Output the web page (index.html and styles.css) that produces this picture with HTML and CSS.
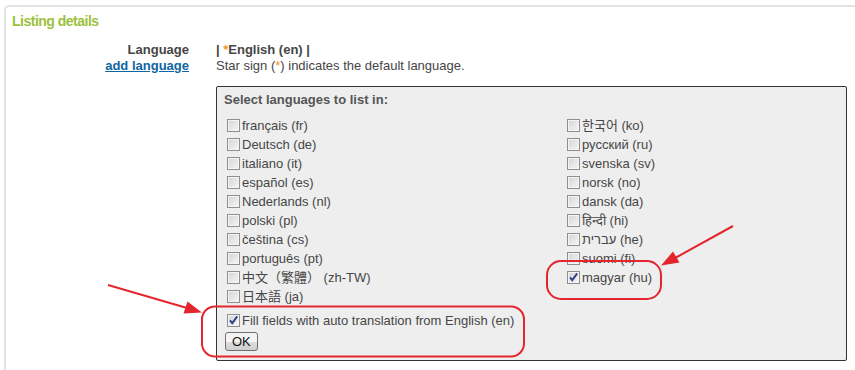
FILE: index.html
```html
<!DOCTYPE html>
<html lang="en">
<head>
    <meta charset="UTF-8">
    <meta name="viewport" content="width=device-width, initial-scale=1.0">
    <title>Listing details</title>
    <link rel="stylesheet" href="styles.css">
</head>
<body>
    <div class="panel">
        <h2 class="panel-title">Listing details</h2>
        <div class="field">
            <div class="field-label">
                <div>Language</div>
                <a href="#" class="add-link">add language</a>
            </div>
            <div class="field-value">
                <div class="current">| <span class="star">*</span>English (en) |</div>
                <div class="note">Star sign (<span class="star">*</span>) indicates the default language.</div>

                <form class="lang-box">
                    <div class="lang-box-title">Select languages to list in:</div>
                    <div class="lang-grid">
                        <div class="lang-col">
                            <label class="lang"><input type="checkbox" name="fr">français (fr)</label>
                            <label class="lang"><input type="checkbox" name="de">Deutsch (de)</label>
                            <label class="lang"><input type="checkbox" name="it">italiano (it)</label>
                            <label class="lang"><input type="checkbox" name="es">español (es)</label>
                            <label class="lang"><input type="checkbox" name="nl">Nederlands (nl)</label>
                            <label class="lang"><input type="checkbox" name="pl">polski (pl)</label>
                            <label class="lang"><input type="checkbox" name="cs">čeština (cs)</label>
                            <label class="lang"><input type="checkbox" name="pt">português (pt)</label>
                            <label class="lang"><input type="checkbox" name="zh-TW">中文（繁體） (zh-TW)</label>
                            <label class="lang"><input type="checkbox" name="ja">日本語 (ja)</label>
                        </div>
                        <div class="lang-col">
                            <label class="lang"><input type="checkbox" name="ko">한국어 (ko)</label>
                            <label class="lang"><input type="checkbox" name="ru">русский (ru)</label>
                            <label class="lang"><input type="checkbox" name="sv">svenska (sv)</label>
                            <label class="lang"><input type="checkbox" name="no">norsk (no)</label>
                            <label class="lang"><input type="checkbox" name="da">dansk (da)</label>
                            <label class="lang"><input type="checkbox" name="hi">हिन्दी (hi)</label>
                            <label class="lang"><input type="checkbox" name="he"><bdi>עברית</bdi>&nbsp;(he)</label>
                            <label class="lang"><input type="checkbox" name="fi">suomi (fi)</label>
                            <label class="lang"><input type="checkbox" name="hu" checked>magyar (hu)</label>
                        </div>
                    </div>
                    <label class="lang auto"><input type="checkbox" name="auto" checked>Fill fields with auto translation from English (en)</label>
                    <button type="button" class="ok-btn">OK</button>
                </form>
            </div>
        </div>
    </div>

    <!-- red notes drawn over the screenshot -->
    <svg class="marks" width="855" height="370" viewBox="0 0 855 370">
        <g fill="none" stroke="#e3262d" stroke-width="2">
            <rect x="202" y="306.5" width="322" height="50" rx="13"/>
            <rect x="547" y="261" width="114" height="38" rx="14"/>
            <line x1="108" y1="285" x2="187" y2="308"/>
            <line x1="733" y1="226" x2="676" y2="257.5"/>
        </g>
        <g fill="#e3262d">
            <polygon points="202,312.5 183.5,313.5 187.5,301.5"/>
            <polygon points="661,265.5 673,251.5 679.5,262.5"/>
        </g>
    </svg>
</body>
</html>
```

FILE: styles.css
```css
body {
    margin: 0;
    font-family: "Liberation Sans", Arial, "Noto Sans CJK TC", sans-serif;
    font-size: 13px;
    color: #464646;
    background: #fff;
    position: relative;
    height: 370px;
    overflow: hidden;
}
.panel {
    margin: 5px 0 0 4px;
    padding: 6px 0 0 6px;
    border-top: 2px solid #e2e2e2;
    border-left: 2px solid #e2e2e2;
    border-top-left-radius: 5px;
    min-height: 365px;
    box-sizing: border-box;
}
.panel-title {
    margin: 0;
    font-size: 14px;
    line-height: 17px;
    letter-spacing: -0.5px;
    color: #9bc13c;
}
.field {
    display: grid;
    grid-template-columns: 177px 1fr;
    column-gap: 27px;
    margin-top: 12px;
    line-height: 16px;
}
.field-label {
    text-align: right;
    font-weight: bold;
}
.add-link {
    color: #0f65a0;
    text-decoration: underline;
}
.current {
    font-weight: bold;
}
.star {
    color: #f7931e;
}
.lang-box {
    width: 631px;
    box-sizing: border-box;
    margin: 12px 0 0;
    padding: 5px 0 9px 7px;
    border: 1px solid #333;
    border-radius: 2px;
    background: #eee;
}
.lang-box-title {
    font-weight: bold;
    color: #555;
}
.lang-grid {
    display: grid;
    grid-template-columns: 340px 1fr;
    margin-top: 8px;
}
.lang {
    display: flex;
    align-items: center;
    height: 19px;
    line-height: 19px;
    white-space: nowrap;
}
.lang input {
    appearance: none;
    -webkit-appearance: none;
    width: 13px;
    height: 13px;
    margin: 0 2px 0 3px;
    border: 1px solid #8e8f8f;
    background: linear-gradient(135deg, #d4d4d4, #f6f6f6);
    box-shadow: inset 0 0 0 1px #f4f4f4;
    flex: none;
}
.lang input:checked {
    background-image: url("data:image/svg+xml,%3Csvg xmlns='http://www.w3.org/2000/svg' viewBox='0 0 11 11'%3E%3Cpath d='M2 5.3l2.3 2.8L9.2 1.4' fill='none' stroke='%232f3e8c' stroke-width='1.9'/%3E%3C/svg%3E"), linear-gradient(135deg, #d4d4d4, #f6f6f6);
    background-size: 11px 11px, auto;
    background-repeat: no-repeat;
}
.auto {
    margin-top: 5px;
}
.ok-btn {
    display: block;
    margin: 2px 0 0 1px;
    height: 19px;
    padding: 0 6px;
    font: 13px "Liberation Sans", Arial, sans-serif;
    color: #111;
    border: 1px solid #707070;
    border-radius: 3px;
    background: linear-gradient(#f4f4f4 50%, #dddddd 50%, #cfcfcf);
}
.marks {
    position: absolute;
    top: 0;
    left: 0;
    pointer-events: none;
}
```
